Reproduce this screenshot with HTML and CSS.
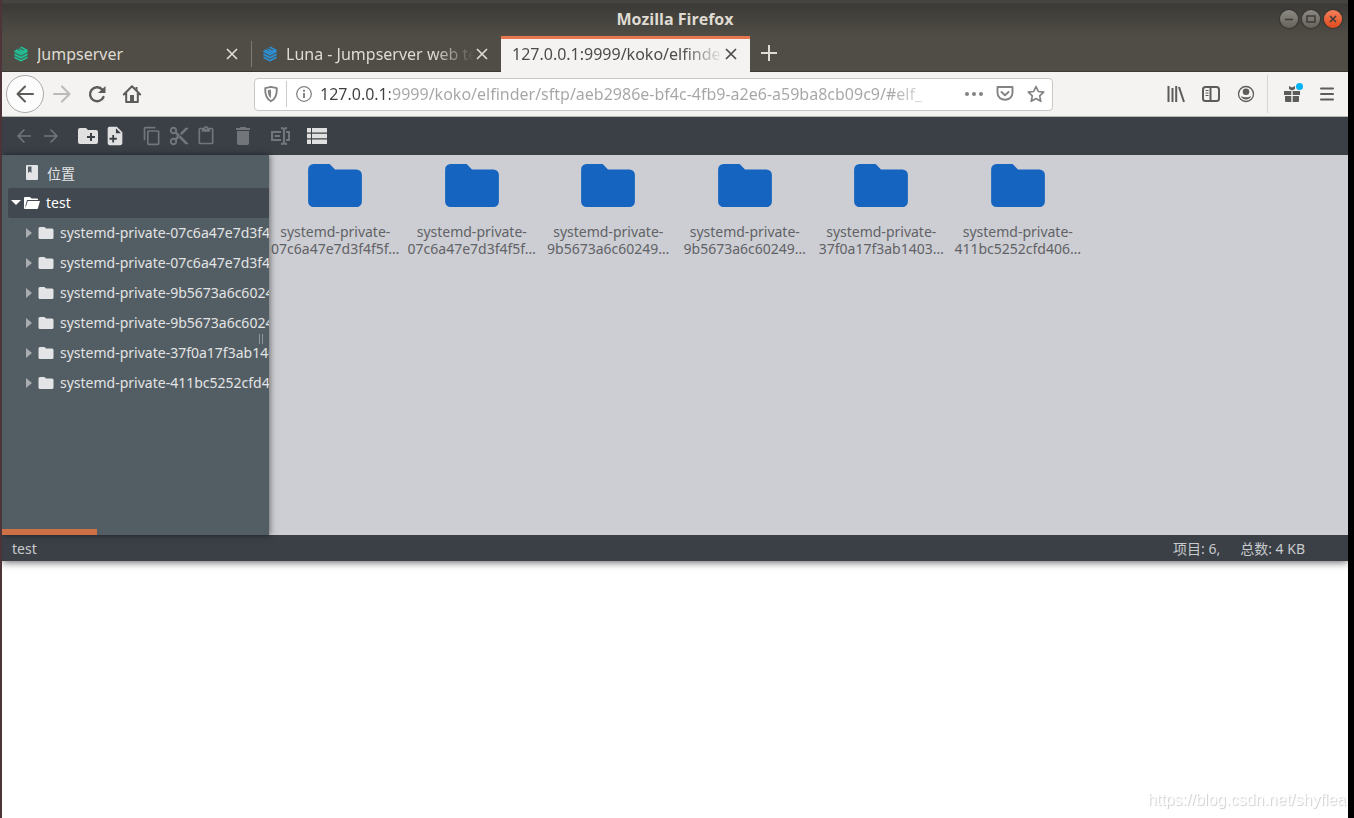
FILE: index.html
```html
<!DOCTYPE html>
<html lang="zh-CN">
<head>
<meta charset="utf-8">
<title>Mozilla Firefox</title>
<link rel="stylesheet" href="styles.css">
</head>
<body>
<svg class="defs" aria-hidden="true">
  <symbol id="logo" viewBox="0 0 16 16"><path d="M8 .5l6.500 3.500v8L8 15.500 1.500 12V4z" fill="currentColor" opacity=".3"/><path d="M8 1.200l5.500 2.700L8 6.700 3 4.200M1.500 5.200L8 8.600l6.500-3.400M1.500 8.300L8 11.700l6.500-3.400M1.500 11.400L8 14.800l6.500-3.400M6 3.600l3.500 1.200" fill="none" stroke="currentColor" stroke-width="1.300"/></symbol>
  <symbol id="close" viewBox="0 0 12 12"><path d="M1 1l10 10M11 1L1 11" fill="none" stroke="currentColor" stroke-width="1.700"/></symbol>
  <symbol id="arrow" viewBox="0 0 20 20"><path d="M18 10H2.500M10 2.500L2.500 10l7.500 7.500" fill="none" stroke="currentColor" stroke-width="2" stroke-linecap="round" stroke-linejoin="round"/></symbol>
  <symbol id="folder" viewBox="2 4 20 16"><path d="M10 4H4a2 2 0 0 0-2 2v12a2 2 0 0 0 2 2h16a2 2 0 0 0 2-2V8a2 2 0 0 0-2-2h-8z" fill="currentColor"/></symbol>
</svg>
<div class="window">
  <header class="titlebar">
    <h1 class="window-title">Mozilla Firefox</h1>
    <div class="window-buttons">
      <button class="win" aria-label="Minimize"><svg viewBox="0 0 18 18"><path d="M5 9.500h8"/></svg></button>
      <button class="win" aria-label="Maximize"><svg viewBox="0 0 18 18"><path d="M5 6h8v6H5z"/></svg></button>
      <button class="win win-close" aria-label="Close"><svg viewBox="0 0 18 18"><path d="M6 6l6 6M12 6l-6 6"/></svg></button>
    </div>
  </header>
  <nav class="tabs" aria-label="Tabs">
    <div class="tab">
      <svg class="logo green"><use href="#logo"/></svg><span class="tab-label">Jumpserver</span>
      <button class="tab-close" aria-label="Close tab"><svg><use href="#close"/></svg></button>
    </div>
    <div class="tab divided">
      <svg class="logo blue"><use href="#logo"/></svg><span class="tab-label fade">Luna - Jumpserver web te</span>
      <button class="tab-close" aria-label="Close tab"><svg><use href="#close"/></svg></button>
    </div>
    <div class="tab active">
      <span class="tab-label fade">127.0.0.1:9999/koko/elfinde</span>
      <button class="tab-close" aria-label="Close tab"><svg><use href="#close"/></svg></button>
    </div>
    <button class="new-tab" aria-label="New tab"><svg viewBox="0 0 16 16"><path d="M8 0v16M0 8h16"/></svg></button>
  </nav>
  <div class="navbar">
    <div class="nav-left">
      <button class="nav-back" aria-label="Back"><svg class="i20"><use href="#arrow"/></svg></button>
      <button class="nav-button disabled" aria-label="Forward"><svg class="i20 flip"><use href="#arrow"/></svg></button>
      <button class="nav-button" aria-label="Reload"><svg class="i20" viewBox="0 0 20 20"><path d="M16.500 13A7 7 0 1 1 15 5.300" fill="none" stroke="currentColor" stroke-width="2.400" stroke-linecap="round"/><path d="M18.500 2v7h-7.500z" fill="currentColor"/></svg></button>
      <button class="nav-button" aria-label="Home"><svg class="i20" viewBox="0 0 20 20"><path d="M1.800 10.500L10 2.300l8.200 8.200M4.200 9v9h11.600V9" fill="none" stroke="currentColor" stroke-width="2" stroke-linecap="round" stroke-linejoin="round"/><path d="M8 17v-6h4v6zM13.500 3h2v4l-2-2z" fill="currentColor"/></svg></button>
    </div>
    <div class="address">
      <button class="addr-button shield" aria-label="Tracking protection"><svg viewBox="0 0 18 18"><path d="M9 1.800l5.800 1.400c.2 6-.8 10.500-5.800 13-5-2.500-6-7-5.800-13z" fill="none" stroke="currentColor" stroke-width="1.900" stroke-linejoin="round"/><path d="M9 4.500v8.800C6.500 11.500 5.700 9 5.800 5.300z" fill="currentColor"/></svg></button>
      <button class="addr-button info" aria-label="Site information"><svg viewBox="0 0 18 18" fill="none" stroke="currentColor"><circle cx="9" cy="9" r="7.300" stroke-width="1.300"/><path d="M9 8v5M9 4.800v1.900" stroke-width="2"/></svg></button>
      <input class="url" type="text" aria-label="Address" value="127.0.0.1:9999/koko/elfinder/sftp/aeb2986e-bf4c-4fb9-a2e6-a59ba8cb09c9/#elf_">
      <div class="addr-actions">
        <button class="addr-button" aria-label="Page actions"><svg viewBox="0 0 18 18" fill="currentColor"><circle cx="2" cy="9" r="2"/><circle cx="9" cy="9" r="2"/><circle cx="16" cy="9" r="2"/></svg></button>
        <button class="addr-button" aria-label="Save to Pocket"><svg viewBox="0 0 18 18" fill="none" stroke="currentColor" stroke-width="1.900" stroke-linecap="round" stroke-linejoin="round"><path d="M1.500 2h15v6c0 9-15 9-15 0zM5.500 7L9 10.200 12.500 7"/></svg></button>
        <button class="addr-button" aria-label="Bookmark"><svg viewBox="0 0 18 18" fill="none" stroke="currentColor" stroke-width="1.700" stroke-linejoin="round"><path d="M9 1.500l2.300 5 5.400.6-4 3.700 1.100 5.500L9 13.600l-4.800 2.700 1.100-5.500-4-3.700 5.400-.6z"/></svg></button>
      </div>
    </div>
    <div class="nav-right">
      <button class="nav-button" aria-label="Library"><svg class="i18" viewBox="0 0 18 18" fill="none" stroke="currentColor" stroke-width="2"><path d="M1.500 1v16M5.500 3v14M9.200 1v16M12 2l5 15"/></svg></button>
      <button class="nav-button" aria-label="Sidebars"><svg class="i18" viewBox="0 0 18 18" fill="none" stroke="currentColor" stroke-width="2"><rect x="1" y="2" width="16" height="14" rx="2.500"/><path d="M8.500 2v14"/><path d="M3.500 5.500h3M3.500 8h3M3.500 10.500h3" stroke-width="1"/></svg></button>
      <button class="nav-button" aria-label="Account"><svg class="i18" viewBox="0 0 18 18"><circle cx="9" cy="9" r="7.500" fill="none" stroke="currentColor" stroke-width="1.300"/><circle cx="9" cy="6.800" r="3.300" fill="currentColor"/><path d="M4 11c2 1.800 8 1.800 10 0-.5 4.500-9.500 4.500-10 0z" fill="currentColor"/></svg></button>
      <span class="nav-separator"></span>
      <button class="nav-button gift" aria-label="What's new"><svg class="i18" viewBox="0 0 18 18" fill="currentColor"><path d="M1 6h7.300v4H1zM9.700 6H17v4H9.700zM2 11h6.300v6H3a1 1 0 0 1-1-1zM9.700 11H16v5a1 1 0 0 1-1 1H9.700zM6 1l3 1.500L12 1v3L9 5.500 6 4z"/></svg></button>
      <button class="nav-button" aria-label="Menu"><svg class="i18" viewBox="0 0 18 18" fill="none" stroke="currentColor" stroke-width="2" stroke-linecap="round"><path d="M3 3.500h12M3 9h12M3 14.500h12"/></svg></button>
    </div>
  </div>

  <main class="finder">
    <div class="toolbar" role="toolbar">
      <div class="group">
        <button class="tool dim" aria-label="Back"><svg class="i16"><use href="#arrow"/></svg></button>
        <button class="tool dim" aria-label="Forward"><svg class="i16 flip"><use href="#arrow"/></svg></button>
      </div>
      <div class="group">
        <button class="tool" aria-label="New folder"><svg viewBox="0 0 24 24"><path fill-rule="evenodd" d="M10 4H4a2 2 0 0 0-2 2v12a2 2 0 0 0 2 2h16a2 2 0 0 0 2-2V8a2 2 0 0 0-2-2h-8zM14 9h2v3h3v2h-3v3h-2v-3h-3v-2h3z"/></svg></button>
        <button class="tool" aria-label="New file"><svg class="i22" viewBox="0 0 24 24"><path fill-rule="evenodd" d="M6 2a2 2 0 0 0-2 2v16a2 2 0 0 0 2 2h12a2 2 0 0 0 2-2V8l-6-6zM13 3.500L18.500 9H13zM9 11h2v3h3v2h-3v3H9v-3H6v-2h3z"/></svg></button>
      </div>
      <div class="group">
        <button class="tool dim" aria-label="Copy"><svg class="i20" viewBox="0 0 24 24"><path d="M16 1H4a2 2 0 0 0-2 2v14h2V3h12zM19 5H8a2 2 0 0 0-2 2v14a2 2 0 0 0 2 2h11a2 2 0 0 0 2-2V7a2 2 0 0 0-2-2zm0 16H8V7h11z"/></svg></button>
        <button class="tool dim" aria-label="Cut"><svg class="i22" viewBox="0 0 24 24"><path d="M9.640 7.640c.23-.5.360-1.050.360-1.640 0-2.210-1.790-4-4-4S2 3.790 2 6s1.790 4 4 4c.59 0 1.140-.13 1.640-.36L10 12l-2.360 2.360C7.140 14.130 6.590 14 6 14c-2.210 0-4 1.790-4 4s1.790 4 4 4 4-1.790 4-4c0-.59-.13-1.140-.36-1.640L12 14l7 7h3v-1zM6 8a2 2 0 1 1 0-4 2 2 0 0 1 0 4zm0 12a2 2 0 1 1 0-4 2 2 0 0 1 0 4zm6-7.500a.5.5 0 1 1 0-1 .5.5 0 0 1 0 1zM19 3l-6 6 2 2 7-7V3z"/></svg></button>
        <button class="tool dim" aria-label="Paste"><svg class="i20" viewBox="0 0 24 24"><path d="M19 2h-4.180a3 3 0 0 0-5.640 0H5a2 2 0 0 0-2 2v16a2 2 0 0 0 2 2h14a2 2 0 0 0 2-2V4a2 2 0 0 0-2-2zm-7 0a1 1 0 1 1 0 2 1 1 0 0 1 0-2zm7 18H5V4h2v3h10V4h2z"/></svg></button>
      </div>
      <div class="group"><button class="tool dim" aria-label="Delete"><svg viewBox="0 0 24 24"><path d="M6 19a2 2 0 0 0 2 2h8a2 2 0 0 0 2-2V7H6zM19 4h-3.500l-1-1h-5l-1 1H5v2h14z"/></svg></button></div>
      <div class="group"><button class="tool dim" aria-label="Rename"><svg viewBox="0 0 24 24" fill="none" stroke="currentColor" stroke-width="2"><path d="M13 8H4v8h9M6.500 12H12M18 8h3v8h-3M13 4c2 0 3 .5 3 2v12c0 1.500-1 2-3 2M19 4c-2 0-3 .5-3 2M19 20c-2 0-3-.5-3-2"/></svg></button></div>
      <div class="group"><button class="tool" aria-label="List view"><svg viewBox="0 0 24 24"><path d="M2 4h4v4.500H2zM7 4h15v4.500H7zM2 9.700h4v4.500H2zM7 9.700h15v4.500H7zM2 15.400h4V20H2zM7 15.400h15V20H7z"/></svg></button></div>
    </div>
    <div class="workspace">
      <aside class="sidebar">
        <ul class="tree">
          <li><a class="row place" href="#places"><svg class="book" viewBox="0 0 12 15"><path fill-rule="evenodd" d="M1 0h10a1 1 0 0 1 1 1v13a1 1 0 0 1-1 1H1a1 1 0 0 1-1-1V1a1 1 0 0 1 1-1zM2 1.500V8l1.800-1.500L5.500 8V1.500z" fill="currentColor"/></svg><span>位置</span></a></li>
          <li><a class="row root" href="#test"><span class="caret down"></span><svg class="small-folder" viewBox="0 0 16 12"><path fill-rule="evenodd" d="M1 0h5l1.500 1.500H13a1 1 0 0 1 1 1V3H3L1.500 8.500V11L3.700 4H16l-2 7a1 1 0 0 1-1 1H1a1 1 0 0 1-1-1V1a1 1 0 0 1 1-1z" fill="currentColor"/></svg><span>test</span></a></li>
          <li><a class="row child" href="#d1"><span class="caret"></span><svg class="small-folder"><use href="#folder"/></svg><span>systemd-private-07c6a47e7d3f4</span></a></li>
          <li><a class="row child" href="#d2"><span class="caret"></span><svg class="small-folder"><use href="#folder"/></svg><span>systemd-private-07c6a47e7d3f4</span></a></li>
          <li><a class="row child" href="#d3"><span class="caret"></span><svg class="small-folder"><use href="#folder"/></svg><span>systemd-private-9b5673a6c6024</span></a></li>
          <li><a class="row child" href="#d4"><span class="caret"></span><svg class="small-folder"><use href="#folder"/></svg><span>systemd-private-9b5673a6c6024</span></a></li>
          <li><a class="row child" href="#d5"><span class="caret"></span><svg class="small-folder"><use href="#folder"/></svg><span>systemd-private-37f0a17f3ab140</span></a></li>
          <li><a class="row child" href="#d6"><span class="caret"></span><svg class="small-folder"><use href="#folder"/></svg><span>systemd-private-411bc5252cfd4</span></a></li>
        </ul>
        <span class="grip"></span>
        <span class="scroll-thumb"></span>
      </aside>
      <section class="files" aria-label="test">
        <a class="file" href="#d1"><svg><use href="#folder"/></svg><span>systemd-private-<br>07c6a47e7d3f4f5f…</span></a>
        <a class="file" href="#d2"><svg><use href="#folder"/></svg><span>systemd-private-<br>07c6a47e7d3f4f5f…</span></a>
        <a class="file" href="#d3"><svg><use href="#folder"/></svg><span>systemd-private-<br>9b5673a6c60249…</span></a>
        <a class="file" href="#d4"><svg><use href="#folder"/></svg><span>systemd-private-<br>9b5673a6c60249…</span></a>
        <a class="file" href="#d5"><svg><use href="#folder"/></svg><span>systemd-private-<br>37f0a17f3ab1403…</span></a>
        <a class="file" href="#d6"><svg><use href="#folder"/></svg><span>systemd-private-<br>411bc5252cfd406…</span></a>
      </section>
    </div>
    <footer class="status"><span class="path">test</span><span>项目: 6,</span><span>总数: 4 KB</span></footer>
  </main>
</div>
<div class="watermark">https://blog.csdn.net/shyflea</div>
</body>
</html>
```
FILE: styles.css
```css
* { box-sizing: border-box; }
body {
  margin: 0;
  min-height: 100vh;
  display: flex;
  background: #fff;
  border-left: 2px solid #4d3439;
  border-right: 6px solid #000;
  font-family: "Noto Sans", "Noto Sans CJK SC", sans-serif;
  font-size: 14px;
}
button {
  display: flex;
  align-items: center;
  justify-content: center;
  flex: none;
  padding: 0;
  border: 0;
  background: none;
  color: inherit;
}
a { color: inherit; text-decoration: none; }
svg { flex: none; }
.defs { position: absolute; width: 0; height: 0; }
.window { flex: 1; min-width: 0; }
.i16 { width: 16px; height: 16px; }
.i18 { width: 18px; height: 18px; }
.i20 { width: 20px; height: 20px; }
.i22 { width: 22px; height: 22px; }
.flip { transform: scaleX(-1); }

.titlebar {
  display: grid;
  grid-template-columns: 1fr auto 1fr;
  align-items: center;
  height: 36px;
  padding: 2px 6px 0 0;
  background: linear-gradient(#45443f 0, #45443f 3px, #3b3a36 4px, #504d46 36px);
}
.window-title {
  grid-column: 2;
  margin: 0;
  padding: 0 0 0 6px;
  color: #dfdbd2;
  font: bold 16px/20px "Open Sans", sans-serif;
}
.window-buttons { display: flex; justify-content: flex-end; gap: 4px; }
.win {
  width: 18px;
  height: 18px;
  border-radius: 50%;
  background: linear-gradient(#8b8982, #66645d);
  box-shadow: 0 0 1px 1px #37352f;
  color: #3c3b37;
}
.win svg { width: 18px; height: 18px; fill: none; stroke: currentColor; stroke-width: 1.5; }
.win-close { background: linear-gradient(#f5805a, #df4a1d); }

.tabs {
  display: flex;
  height: 36px;
  background: #504d46;
  box-shadow: inset 0 -1px #3c3a35;
  color: #dfdbd2;
  font-family: "Noto Sans", sans-serif;
  font-size: 16px;
}
.tab {
  display: flex;
  align-items: center;
  flex: 0 1 249px;
  min-width: 0;
  padding: 0 12px 0 11px;
}
.tab.divided { flex-basis: 250px; background: linear-gradient(#7d7a72, #7d7a72) 0 5px / 1px 26px no-repeat; }
.tab.active {
  padding-bottom: 3px;
  background: #f4f3f1;
  border-top: 3px solid #e9774d;
  color: #4c4c4c;
}
.tab-label { flex: 1; overflow: hidden; white-space: nowrap; line-height: 22px; }
.fade { -webkit-mask-image: linear-gradient(90deg, #000 calc(100% - 42px), transparent); mask-image: linear-gradient(90deg, #000 calc(100% - 42px), transparent); }
.logo { width: 16px; height: 16px; margin-right: 8px; }
.green { color: #1ec79c; }
.blue { color: #2a94dd; }
.tab-close { width: 14px; height: 20px; }
.tab-close svg { width: 12px; height: 12px; }
.new-tab { width: 37px; height: 34px; }
.new-tab svg { width: 16px; height: 16px; fill: none; stroke: currentColor; stroke-width: 2; }

.navbar {
  display: flex;
  align-items: center;
  justify-content: space-between;
  height: 45px;
  padding: 0 4px;
  background: #f4f3f1;
  border-bottom: 1px solid #b8b6b2;
  color: #5c5c5a;
}
.nav-left, .nav-right, .address, .addr-actions { display: flex; align-items: center; }
.nav-back {
  width: 38px;
  height: 38px;
  border: 1px solid #aaa;
  border-radius: 50%;
  background: #fcfcfc;
}
.nav-button { width: 35px; height: 36px; }
.disabled { color: #bbb9b7; }
.nav-left { flex: 0 1 248px; }
.address {
  flex: 0 1 799px;
  min-width: 0;
  height: 33px;
  padding: 0 1px 0 4px;
  background: #fff;
  border: 1px solid #c9c7c4;
  border-radius: 4px;
  color: #838383;
}
.addr-button { width: 31px; height: 26px; }
.addr-button svg { width: 18px; height: 18px; }
.shield { width: 28px; border-right: 1px solid #ccc; padding-right: 4px; }
.info { width: 33px; }
.url {
  flex: 1;
  min-width: 0;
  height: 26px;
  padding: 0;
  border: 0;
  outline: 0;
  font: 16px/26px "Noto Sans", sans-serif;
  color: transparent;
  background: linear-gradient(90deg, #3f3f3f 70px, #a5a5a5 70px, #a5a5a5 570px, #e4e4e4 606px);
  -webkit-background-clip: text;
  background-clip: text;
}
.nav-right { flex: 1; justify-content: flex-end; }
.nav-separator { width: 1px; height: 38px; margin: 0 6px 0 4px; background: #d8d6d3; }
.gift { position: relative; }
.gift::after {
  content: "";
  position: absolute;
  top: 7px;
  right: 6px;
  width: 7px;
  height: 7px;
  border-radius: 50%;
  background: #00b3f4;
}

.finder { box-shadow: 0 1px 8px rgba(0, 0, 0, .65); clip-path: inset(0 0 -12px 0); }
.toolbar {
  display: flex;
  align-items: center;
  gap: 10px;
  height: 38px;
  padding-left: 8px;
  background: #3b4047;
  color: #e0e0e0;
}
.group { display: flex; }
.tool { width: 27px; height: 30px; }
.tool svg { fill: currentColor; }
.tool svg:not([class]) { width: 24px; height: 24px; }
.tool svg[fill="none"] { fill: none; }
.dim { color: #72767b; }

.workspace { display: flex; min-height: 380px; background: #cdced3; }
.sidebar {
  position: relative;
  z-index: 1;
  flex: 0 0 267px;
  min-width: 0;
  padding: 3px 0 0 6px;
  background: #535e64;
  box-shadow: 1px 0 6px rgba(0, 0, 0, .5);
  color: #e3e4e5;
}
.tree { margin: 0; padding: 0; list-style: none; overflow: hidden; }
.row {
  display: flex;
  align-items: center;
  height: 30px;
  padding-bottom: 1px;
  white-space: nowrap;
}
.row.place { padding-left: 18px; gap: 9px; }
.row.root { padding-left: 3px; background: #42484f; border-radius: 2px 0 0 2px; color: #fff; }
.row.child { padding-left: 18px; }
.book { width: 12px; height: 15px; }
.small-folder { width: 16px; height: 12px; margin-right: 6px; }
.caret {
  flex: none;
  width: 6px;
  margin-right: 6px;
  border: solid transparent;
  border-width: 5px 0 5px 6px;
  border-left-color: #a9adaf;
}
.caret.down { width: 10px; margin-right: 3px; border-width: 5px 5px 0; border-color: #fff transparent; }
.grip {
  position: absolute;
  right: 6px;
  top: 179px;
  width: 4px;
  height: 10px;
  border: solid #8e979b;
  border-width: 0 1px;
}
.scroll-thumb { position: absolute; left: 0; bottom: 0; width: 95px; height: 6px; background: #ce7146; }
.files {
  display: grid;
  grid-template-columns: repeat(6, minmax(0, 1fr));
  align-content: start;
  gap: 10px;
  flex: 0 1 812px;
  padding: 9px 0 0 3px;
  color: #616266;
}
.file { display: flex; flex-direction: column; align-items: center; gap: 16px; line-height: 17px; text-align: center; white-space: nowrap; }
.file svg { width: 54px; height: 43px; color: #1565c0; }
.status {
  display: flex;
  align-items: center;
  gap: 20px;
  height: 26px;
  padding: 0 43px 0 10px;
  background: #3b4047;
  color: #c8cacc;
}
.path { flex: 1; }
.watermark {
  position: fixed;
  right: 8px;
  bottom: 9px;
  color: #fff;
  font: 16px/18px "Liberation Sans", sans-serif;
  text-shadow: 1px 1px 1px #ccc;
}
```
